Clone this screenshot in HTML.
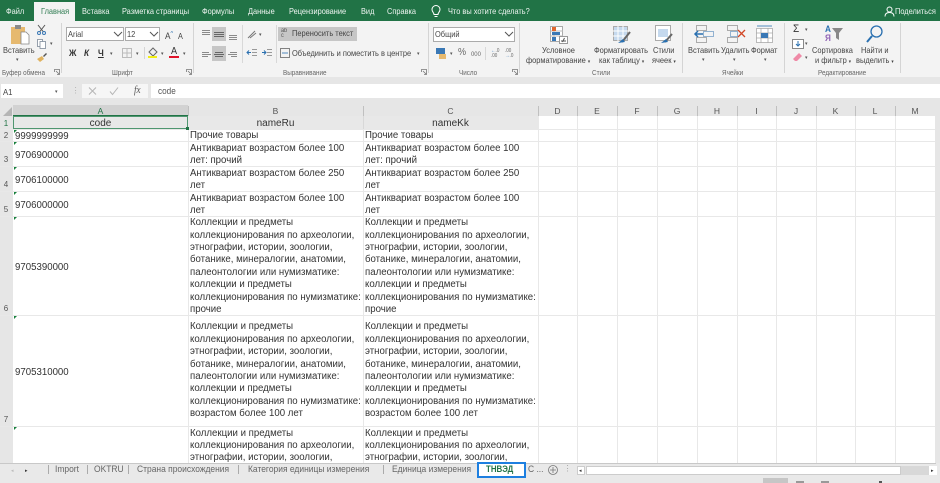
<!DOCTYPE html>
<html lang="ru"><head><meta charset="utf-8"><title>Excel</title>
<style>
html,body{margin:0;padding:0;background:#fff}
#p{position:relative;width:940px;height:483px;overflow:hidden;background:#fff;font-family:"Liberation Sans","Noto Sans CJK SC",sans-serif;filter:blur(.3px)}
#p div,#p span.a{position:absolute;white-space:nowrap}
.t{color:#fff;font-size:8.5px;top:6px;line-height:11px;opacity:.93;transform:scaleX(.87);transform-origin:0 50%}
.r{color:#444;font-size:8.2px;line-height:10px;transform:scaleX(.91);transform-origin:0 50%}
.g{color:#666;font-size:7.2px;line-height:9px;top:68px;transform:scaleX(.88);transform-origin:0 50%}
.v{background:#d4d4d4;width:1px;top:23px;height:50px}
.h{color:#555;font-size:8.5px;top:105px;line-height:12px;text-align:center}
.c{color:#333;font-size:10px;line-height:12px;margin-top:1px;transform:scaleX(.965);transform-origin:0 50%}
.d{margin-top:2px}
.n{color:#555;font-size:8px;left:0;width:12px;text-align:center;line-height:10px}
.gl{background:#e8e8e8}
.m{width:0;height:0;border-left:3px solid #18803c;border-bottom:3px solid transparent;left:14px}
.s{color:#666;font-size:9.3px;line-height:12px;top:463px;transform:scaleX(.91);transform-origin:0 50%}
.sp{background:#aaa;width:1px;top:465px;height:9px}
.ar{color:#555;font-size:5px;line-height:6px}
svg{position:absolute;overflow:visible}
</style></head><body><div id="p">

<div style="left:0;top:0;width:940px;height:21px;background:#217346"></div>
<div style="left:34px;top:2px;width:41px;height:19px;background:#f3f3f3"></div>
<div class="t" style="left:6px">Файл</div>
<div class="t" style="left:41px;color:#217346">Главная</div>
<div class="t" style="left:82px">Вставка</div>
<div class="t" style="left:122px">Разметка страницы</div>
<div class="t" style="left:202px">Формулы</div>
<div class="t" style="left:248px">Данные</div>
<div class="t" style="left:289px">Рецензирование</div>
<div class="t" style="left:361px">Вид</div>
<div class="t" style="left:387px">Справка</div>
<svg style="left:431px;top:5px" width="10" height="13" viewBox="0 0 10 13" fill="none" stroke="#fff"><path d="M3 9.5C3 7.5 1 7 1 4.500A4 4 0 0 1 9 4.500C9 7 7 7.500 7 9.500ZM3.500 11.500H6.500"/></svg>
<div class="t" style="left:448px">Что вы хотите сделать?</div>
<svg style="left:884px;top:6px" width="11" height="11" viewBox="0 0 11 11" fill="none" stroke="#fff"><circle cx="5.500" cy="3.500" r="2.500"/><path d="M1 10.500C1 7.500 3 6.500 5.500 6.500S10 7.500 10 10.500"/></svg>
<div class="t" style="left:895px">Поделиться</div>

<div style="left:0;top:21px;width:940px;height:56px;background:#f3f3f3"></div>
<div style="left:0;top:77px;width:940px;height:7px;background:#e6e6e6"></div>
<div class="v" style="left:61px"></div><div class="v" style="left:193px"></div><div class="v" style="left:428px"></div><div class="v" style="left:519px"></div><div class="v" style="left:682px"></div><div class="v" style="left:784px"></div><div class="v" style="left:900px"></div>

<!-- clipboard -->
<svg style="left:11px;top:25px" width="19" height="20" viewBox="0 0 19 20"><rect x="0" y="2" width="14" height="17" fill="#e6b96f"/><rect x="4" y="0" width="6" height="4" fill="#8a8a8a"/><path d="M10 7H15L18 10V19H10Z" fill="#fff" stroke="#888" stroke-width=".8"/></svg>
<div class="r" style="left:3px;top:46px">Вставить</div><div class="ar" style="left:16px;top:57px">▾</div>
<svg style="left:37px;top:25px" width="9" height="10" viewBox="0 0 9 10" fill="none" stroke="#555"><path d="M1 0L6.500 7M8 0L2.500 7" /><circle cx="2" cy="8" r="1.500" stroke="#3a78b5"/><circle cx="7" cy="8" r="1.500" stroke="#3a78b5"/></svg>
<svg style="left:37px;top:39px" width="9" height="10" viewBox="0 0 9 10" fill="#fff" stroke="#7d8a99" stroke-width=".8"><rect x=".5" y=".5" width="5" height="7"/><rect x="3" y="2.500" width="5.500" height="7"/></svg>
<div class="ar" style="left:50px;top:41px">▾</div>
<svg style="left:37px;top:53px" width="10" height="9" viewBox="0 0 10 9"><path d="M0 6L5 3L7 6L3 9Z" fill="#e0b25e"/><path d="M6 3L9 0L10 1L7 4Z" fill="#555"/></svg>
<div class="g" style="left:2px">Буфер обмена</div>
<svg style="left:54px;top:69px" width="6" height="6" fill="none" stroke="#777" stroke-width=".8"><path d="M.5 3V.5H5.500V5.500H3M2 2L5 5"/></svg>

<!-- font -->
<div style="left:66px;top:27px;width:58px;height:14px;background:#fff;border:1px solid #ababab;box-sizing:border-box"></div>
<div style="left:125px;top:27px;width:35px;height:14px;background:#fff;border:1px solid #ababab;box-sizing:border-box"></div>
<div class="r" style="left:68px;top:30px;color:#444">Arial</div>
<div class="r" style="left:127px;top:30px;color:#444">12</div>
<svg style="left:114px;top:32px" width="8" height="5" fill="none" stroke="#555"><path d="M0 0L4 4L8 0"/></svg>
<svg style="left:150px;top:32px" width="8" height="5" fill="none" stroke="#555"><path d="M0 0L4 4L8 0"/></svg>
<div class="r" style="left:165px;top:29px;font-size:9px;color:#444">A<span style="font-size:6px;color:#2a70b0;vertical-align:4px">^</span></div>
<div class="r" style="left:178px;top:30px;font-size:8px;color:#444">A<span style="font-size:6px;color:#2a70b0;vertical-align:3px">ˇ</span></div>
<div class="r" style="left:69px;top:48px;font-weight:bold;font-size:9px;color:#333">Ж</div>
<div class="r" style="left:84px;top:48px;font-weight:bold;font-style:italic;font-size:9px;color:#333">К</div>
<div class="r" style="left:98px;top:48px;font-weight:bold;font-size:9px;color:#333;text-decoration:underline">Ч</div>
<div class="ar" style="left:110px;top:51px">▾</div>
<svg style="left:122px;top:48px" width="10" height="10" fill="none" stroke="#bbb"><rect x=".5" y=".5" width="9" height="9"/><path d="M5 0V10M0 5H10"/></svg>
<div class="ar" style="left:136px;top:51px">▾</div>
<div style="left:144px;top:47px;width:1px;height:12px;background:#d4d4d4"></div>
<svg style="left:148px;top:48px" width="10" height="8" viewBox="0 0 10 8" fill="none" stroke="#666"><path d="M5 0L9 4L5 8L1 4Z" fill="#eee"/></svg>
<div style="left:148px;top:56px;width:9px;height:2px;background:#f2ee14"></div>
<div class="ar" style="left:161px;top:51px">▾</div>
<div class="r" style="left:171px;top:47px;font-size:10px;color:#333">A</div>
<div style="left:169px;top:56px;width:10px;height:2px;background:#e0142a"></div>
<div class="ar" style="left:183px;top:51px">▾</div>
<div class="g" style="left:112px">Шрифт</div>
<svg style="left:186px;top:69px" width="6" height="6" fill="none" stroke="#777" stroke-width=".8"><path d="M.5 3V.5H5.500V5.500H3M2 2L5 5"/></svg>

<!-- alignment -->
<div style="left:212px;top:27px;width:14px;height:14px;background:#c6c6c6"></div>
<div style="left:212px;top:46px;width:14px;height:15px;background:#c6c6c6"></div>
<svg style="left:200px;top:29px" width="40" height="30" fill="none" stroke="#8a8a8a"><path d="M2 1.500H10M2 3.500H10M2 5.500H10" /><path stroke="#666" d="M14 3.500H24M14 5.500H24M14 7.500H24"/><path d="M29 6.500H37M29 8.500H37M29 10.500H37"/><path d="M2 23.500H9M2 25.500H11M2 27.500H8"/><path stroke="#666" d="M15 23.500H23M14 25.500H24M15 27.500H23"/><path d="M30 23.500H37M28 25.500H37M31 27.500H37"/></svg>
<svg style="left:247px;top:30px" width="10" height="9" fill="none" stroke="#777"><path d="M1 8L8 1M3 8L9 3" /></svg><div class="ar" style="left:259px;top:32px">▾</div>
<div style="left:242px;top:25px;width:1px;height:38px;background:#d8d8d8"></div>
<svg style="left:247px;top:49px" width="10" height="9" fill="none" stroke="#999"><path d="M5 .5H10M5 3.500H10M5 6.500H10"/><path stroke="#2a70b0" d="M4 3.500H0M2 1.500L0 3.500L2 5.500"/></svg>
<svg style="left:262px;top:49px" width="10" height="9" fill="none" stroke="#999"><path d="M5 .5H10M5 3.500H10M5 6.500H10"/><path stroke="#2a70b0" d="M0 3.500H4M2 1.500L4 3.500L2 5.500"/></svg>
<div style="left:276px;top:25px;width:1px;height:38px;background:#d8d8d8"></div>
<div style="left:278px;top:27px;width:79px;height:14px;background:#c6c6c6"></div>
<div class="r" style="left:281px;top:29px;font-size:6px;line-height:5px;color:#555;white-space:normal;width:8px">ab<br>c</div>
<div class="r" style="left:292px;top:29px">Переносить текст</div>
<svg style="left:280px;top:48px" width="10" height="11" fill="none" stroke="#666" stroke-width=".8"><rect x=".5" y=".5" width="9" height="9"/><path stroke="#2a70b0" d="M2 5H8"/></svg>
<div class="r" style="left:292px;top:49px">Объединить и поместить в центре</div>
<div class="ar" style="left:417px;top:51px">▾</div>
<div class="g" style="left:283px">Выравнивание</div>
<svg style="left:421px;top:69px" width="6" height="6" fill="none" stroke="#777" stroke-width=".8"><path d="M.5 3V.5H5.500V5.500H3M2 2L5 5"/></svg>

<!-- number -->
<div style="left:433px;top:27px;width:82px;height:15px;background:#fff;border:1px solid #ababab;box-sizing:border-box"></div>
<div class="r" style="left:435px;top:30px">Общий</div>
<svg style="left:505px;top:32px" width="8" height="5" fill="none" stroke="#555"><path d="M0 0L4 4L8 0"/></svg>
<svg style="left:436px;top:48px" width="11" height="11"><rect width="9" height="6" fill="#3a78b5"/><rect x="3" y="6" width="7" height="5" fill="#e6b96f"/></svg>
<div class="ar" style="left:450px;top:51px">▾</div>
<div class="r" style="left:458px;top:48px;font-size:10px;color:#666">%</div>
<div class="r" style="left:471px;top:50px;font-size:6.500px;color:#666">000</div>
<div style="left:485px;top:47px;width:1px;height:13px;background:#d8d8d8"></div>
<div class="r" style="left:491px;top:49px;font-size:5px;line-height:5px;color:#3a78b5">←<span style="color:#666">.0</span><br><span style="color:#666">.00</span></div>
<div class="r" style="left:505px;top:49px;font-size:5px;line-height:5px;color:#666">.00<br><span style="color:#3a78b5">→</span>.0</div>
<div class="g" style="left:459px">Число</div>
<svg style="left:512px;top:69px" width="6" height="6" fill="none" stroke="#777" stroke-width=".8"><path d="M.5 3V.5H5.500V5.500H3M2 2L5 5"/></svg>

<!-- styles -->
<svg style="left:550px;top:26px" width="19" height="18"><rect x=".5" y=".5" width="12" height="15" fill="#fff" stroke="#aaa"/><path d="M0 5H13M0 10H13M4 0V16" stroke="#bbb"/><rect x="2" y="1" width="4" height="4" fill="#e0672e"/><rect x="2" y="6" width="8" height="3" fill="#3a78b5"/><rect x="2" y="11" width="4" height="4" fill="#3a78b5"/><rect x="9.500" y="10.500" width="8" height="7" fill="#fff" stroke="#999"/><path d="M11 15H16M14.500 12L12.500 16" stroke="#555"/></svg>
<div class="r" style="left:542px;top:46px">Условное</div>
<div class="r" style="left:526px;top:56px">форматирование <span style="font-size:5px">▾</span></div>
<svg style="left:613px;top:26px" width="18" height="18"><rect x=".5" y=".5" width="14" height="14" fill="#c5d9ee" stroke="#aaa"/><path d="M0 5H15M0 10H15M5 0V15M10 0V15" stroke="#fff"/><path d="M9 16L17 6" stroke="#666" stroke-width="2"/><path d="M5 17L10 13L12 16Z" fill="#2a70b0"/></svg>
<div class="r" style="left:594px;top:46px">Форматировать</div>
<div class="r" style="left:599px;top:56px">как таблицу <span style="font-size:5px">▾</span></div>
<svg style="left:655px;top:25px" width="18" height="19"><rect x=".5" y=".5" width="15" height="15" fill="#fff" stroke="#aaa"/><rect x="3" y="4" width="10" height="8" fill="#c5d9ee"/><path d="M10 17L17 9" stroke="#666" stroke-width="2"/><path d="M6 18L11 14L13 17Z" fill="#2a70b0"/></svg>
<div class="r" style="left:653px;top:46px">Стили</div>
<div class="r" style="left:652px;top:56px">ячеек <span style="font-size:5px">▾</span></div>
<div class="g" style="left:592px">Стили</div>

<!-- cells -->
<svg style="left:694px;top:25px" width="20" height="19" fill="none" stroke="#999" stroke-width=".8"><rect x="2.500" y=".5" width="10" height="5"/><rect x="2.500" y="12.500" width="10" height="5"/><rect x="9.500" y="6.500" width="10" height="5" stroke="#7aa2c8"/><path stroke="#2a70b0" stroke-width="1.500" d="M9 9H1M4 6L1 9L4 12"/></svg>
<div class="r" style="left:688px;top:46px">Вставить</div><div class="ar" style="left:702px;top:57px">▾</div>
<svg style="left:727px;top:25px" width="19" height="19" fill="none" stroke="#999" stroke-width=".8"><rect x=".5" y=".5" width="10" height="5"/><rect x=".5" y="12.500" width="10" height="5"/><rect x="3.500" y="6.500" width="7" height="5" stroke="#7aa2c8"/><path stroke="#d24726" stroke-width="1.300" d="M11 5L18 12M18 5L11 12"/></svg>
<div class="r" style="left:721px;top:46px">Удалить</div><div class="ar" style="left:733px;top:57px">▾</div>
<svg style="left:756px;top:25px" width="17" height="19" fill="none" stroke="#aaa" stroke-width=".8"><rect x=".5" y="3.500" width="16" height="14" fill="#fff"/><path d="M0 8H17M0 13H17M5 3V18M12 3V18"/><rect x="5" y="8" width="7" height="5" fill="#3a78b5" stroke="none"/><path stroke="#2a70b0" d="M1 1H16"/></svg>
<div class="r" style="left:751px;top:46px">Формат</div><div class="ar" style="left:764px;top:57px">▾</div>
<div class="g" style="left:722px">Ячейки</div>

<!-- editing -->
<div class="r" style="left:793px;top:23px;font-size:11px;line-height:13px;color:#333">Σ</div><div class="ar" style="left:805px;top:27px">▾</div>
<svg style="left:792px;top:39px" width="12" height="10" fill="#fff" stroke="#888"><rect x=".5" y=".5" width="11" height="9"/><path stroke="#2a70b0" d="M6 2V7M4 5L6 7L8 5"/></svg><div class="ar" style="left:805px;top:41px">▾</div>
<svg style="left:793px;top:53px" width="10" height="9"><path d="M0 6L6 0L9 3L4 8H2Z" fill="#ef8aa7"/></svg><div class="ar" style="left:805px;top:55px">▾</div>
<div class="r" style="left:825px;top:24px;font-size:9px;line-height:10px;font-weight:bold;color:#2a70b0">А</div>
<div class="r" style="left:825px;top:34px;font-size:9px;line-height:9px;font-weight:bold;color:#9063b5">Я</div>
<svg style="left:832px;top:28px" width="11" height="12"><path d="M0 0H11L7 5V12L4 10V5Z" fill="#888"/></svg>
<div class="r" style="left:812px;top:46px">Сортировка</div>
<div class="r" style="left:815px;top:56px">и фильтр <span style="font-size:5px">▾</span></div>
<svg style="left:866px;top:25px" width="17" height="18" fill="none" stroke="#2a70b0" stroke-width="1.300"><circle cx="10.500" cy="6.500" r="5.500"/><path stroke-width="2" d="M6 11L1 17"/></svg>
<div class="r" style="left:861px;top:46px">Найти и</div>
<div class="r" style="left:856px;top:56px">выделить <span style="font-size:5px">▾</span></div>
<div class="g" style="left:818px">Редактирование</div>

<!-- formula bar -->
<div style="left:0;top:84px;width:940px;height:21px;background:#e6e6e6"></div>
<div style="left:1px;top:84px;width:62px;height:14px;background:#fff"></div>
<div class="r" style="left:3px;top:87px;font-size:8.500px">A1</div><div class="ar" style="left:55px;top:89px">▾</div>
<div style="left:82px;top:84px;width:66px;height:14px;background:#f6f6f6"></div>
<div style="left:151px;top:84px;width:789px;height:14px;background:#fff"></div>
<div class="r" style="left:72px;top:86px;color:#aaa">⋮</div>
<svg style="left:89px;top:87px" width="30" height="9" fill="none" stroke="#b5b5b5"><path d="M0 .5L7 7.500M7 .5L0 7.500M21 4.500L23.500 7.500L29 .5"/></svg>
<div class="r" style="left:134px;top:86px;font-family:'Liberation Serif',serif;font-style:italic;font-size:10px;color:#555">fx</div>
<div class="r" style="left:158px;top:86px;font-size:9px;color:#555">code</div>

<!-- headers -->
<div style="left:0;top:105px;width:940px;height:11px;background:#e6e6e6"></div>
<div style="left:0;top:105px;width:13px;height:358px;background:#e6e6e6"></div>
<div style="left:13px;top:105px;width:175px;height:11px;background:#d2d2d2"></div>
<div style="left:13px;top:115px;width:175px;height:1px;background:#217346"></div>
<svg style="left:3px;top:107px" width="9" height="9"><path d="M9 0V9H0Z" fill="#b5b5b5"/></svg>
<div class="h" style="left:13px;width:175px;color:#217346">A</div>
<div class="h" style="left:188px;width:175px">B</div>
<div class="h" style="left:363px;width:175px">C</div>
<div class="h" style="left:538px;width:39px">D</div>
<div class="h" style="left:577px;width:40px">E</div>
<div class="h" style="left:617px;width:40px">F</div>
<div class="h" style="left:657px;width:40px">G</div>
<div class="h" style="left:697px;width:40px">H</div>
<div class="h" style="left:737px;width:39px">I</div>
<div class="h" style="left:776px;width:40px">J</div>
<div class="h" style="left:816px;width:39px">K</div>
<div class="h" style="left:855px;width:40px">L</div>
<div class="h" style="left:895px;width:40px">M</div>
<div style="left:188px;top:106px;width:1px;height:10px;background:#c0c0c0"></div>
<div style="left:363px;top:106px;width:1px;height:10px;background:#c0c0c0"></div>
<div style="left:538px;top:106px;width:1px;height:10px;background:#c0c0c0"></div>
<div style="left:577px;top:106px;width:1px;height:10px;background:#c0c0c0"></div>
<div style="left:617px;top:106px;width:1px;height:10px;background:#c0c0c0"></div>
<div style="left:657px;top:106px;width:1px;height:10px;background:#c0c0c0"></div>
<div style="left:697px;top:106px;width:1px;height:10px;background:#c0c0c0"></div>
<div style="left:737px;top:106px;width:1px;height:10px;background:#c0c0c0"></div>
<div style="left:776px;top:106px;width:1px;height:10px;background:#c0c0c0"></div>
<div style="left:816px;top:106px;width:1px;height:10px;background:#c0c0c0"></div>
<div style="left:855px;top:106px;width:1px;height:10px;background:#c0c0c0"></div>
<div style="left:895px;top:106px;width:1px;height:10px;background:#c0c0c0"></div>

<!-- grid -->
<div class="gl" style="left:188px;top:116px;width:1px;height:347px"></div>
<div class="gl" style="left:363px;top:116px;width:1px;height:347px"></div>
<div class="gl" style="left:538px;top:116px;width:1px;height:347px"></div>
<div class="gl" style="left:577px;top:116px;width:1px;height:347px"></div>
<div class="gl" style="left:617px;top:116px;width:1px;height:347px"></div>
<div class="gl" style="left:657px;top:116px;width:1px;height:347px"></div>
<div class="gl" style="left:697px;top:116px;width:1px;height:347px"></div>
<div class="gl" style="left:737px;top:116px;width:1px;height:347px"></div>
<div class="gl" style="left:776px;top:116px;width:1px;height:347px"></div>
<div class="gl" style="left:816px;top:116px;width:1px;height:347px"></div>
<div class="gl" style="left:855px;top:116px;width:1px;height:347px"></div>
<div class="gl" style="left:895px;top:116px;width:1px;height:347px"></div>
<div style="left:935px;top:105px;width:5px;height:359px;background:#e6e6e6"></div>
<div class="gl" style="left:0;top:129px;width:935px;height:1px"></div>
<div class="gl" style="left:0;top:141px;width:935px;height:1px"></div>
<div class="gl" style="left:0;top:166px;width:935px;height:1px"></div>
<div class="gl" style="left:0;top:191px;width:935px;height:1px"></div>
<div class="gl" style="left:0;top:216px;width:935px;height:1px"></div>
<div class="gl" style="left:0;top:315px;width:935px;height:1px"></div>
<div class="gl" style="left:0;top:426px;width:935px;height:1px"></div>

<!-- row 1 -->
<div style="left:13px;top:116px;width:175px;height:13px;background:#e8e8e8;outline:1px solid #4f9670;outline-offset:-1px"></div>
<div style="left:188px;top:116px;width:350px;height:13px;background:#e8e8e8"></div>
<div style="left:363px;top:116px;width:1px;height:13px;background:#d8d8d8"></div>
<div style="left:186px;top:127px;width:3px;height:3px;background:#217346"></div>
<div class="c" style="left:13px;width:175px;text-align:center;top:117px;transform:none">code</div>
<div class="c" style="left:188px;width:175px;text-align:center;top:117px;transform:none">nameRu</div>
<div class="c" style="left:363px;width:175px;text-align:center;top:117px;transform:none">nameKk</div>

<!-- row numbers -->
<div class="n" style="top:119px;color:#217346">1</div>
<div class="n" style="top:131px">2</div>
<div class="n" style="top:155px">3</div>
<div class="n" style="top:180px">4</div>
<div class="n" style="top:205px">5</div>
<div class="n" style="top:304px">6</div>
<div class="n" style="top:415px">7</div>

<div class="m" style="top:130px"></div><div class="m" style="top:142px"></div><div class="m" style="top:167px"></div><div class="m" style="top:192px"></div><div class="m" style="top:217px"></div><div class="m" style="top:316px"></div><div class="m" style="top:427px"></div>

<div class="c d" style="left:15px;top:129px">9999999999</div>
<div class="c d" style="left:15px;top:148px">9706900000</div>
<div class="c d" style="left:15px;top:173px">9706100000</div>
<div class="c d" style="left:15px;top:198px">9706000000</div>
<div class="c d" style="left:15px;top:260px">9705390000</div>
<div class="c d" style="left:15px;top:365px">9705310000</div>

<!-- B -->
<div class="c" style="left:190px;top:129px">Прочие товары</div>
<div class="c" style="left:190px;top:142px">Антиквариат возрастом более 100</div>
<div class="c" style="left:190px;top:154px">лет: прочий</div>
<div class="c" style="left:190px;top:167px">Антиквариат возрастом более 250</div>
<div class="c" style="left:190px;top:179px">лет</div>
<div class="c" style="left:190px;top:192px">Антиквариат возрастом более 100</div>
<div class="c" style="left:190px;top:204px">лет</div>
<div class="c" style="left:190px;top:216px">Коллекции и предметы</div>
<div class="c" style="left:190px;top:229px">коллекционирования по археологии,</div>
<div class="c" style="left:190px;top:241px">этнографии, истории, зоологии,</div>
<div class="c" style="left:190px;top:253px">ботанике, минералогии, анатомии,</div>
<div class="c" style="left:190px;top:266px">палеонтологии или нумизматике:</div>
<div class="c" style="left:190px;top:278px">коллекции и предметы</div>
<div class="c" style="left:190px;top:291px">коллекционирования по нумизматике:</div>
<div class="c" style="left:190px;top:303px">прочие</div>
<div class="c" style="left:190px;top:320px">Коллекции и предметы</div>
<div class="c" style="left:190px;top:333px">коллекционирования по археологии,</div>
<div class="c" style="left:190px;top:345px">этнографии, истории, зоологии,</div>
<div class="c" style="left:190px;top:358px">ботанике, минералогии, анатомии,</div>
<div class="c" style="left:190px;top:370px">палеонтологии или нумизматике:</div>
<div class="c" style="left:190px;top:382px">коллекции и предметы</div>
<div class="c" style="left:190px;top:395px">коллекционирования по нумизматике:</div>
<div class="c" style="left:190px;top:407px">возрастом более 100 лет</div>
<div class="c" style="left:190px;top:427px">Коллекции и предметы</div>
<div class="c" style="left:190px;top:439px">коллекционирования по археологии,</div>
<div class="c" style="left:190px;top:451px">этнографии, истории, зоологии,</div>

<!-- C -->
<div class="c" style="left:365px;top:129px">Прочие товары</div>
<div class="c" style="left:365px;top:142px">Антиквариат возрастом более 100</div>
<div class="c" style="left:365px;top:154px">лет: прочий</div>
<div class="c" style="left:365px;top:167px">Антиквариат возрастом более 250</div>
<div class="c" style="left:365px;top:179px">лет</div>
<div class="c" style="left:365px;top:192px">Антиквариат возрастом более 100</div>
<div class="c" style="left:365px;top:204px">лет</div>
<div class="c" style="left:365px;top:216px">Коллекции и предметы</div>
<div class="c" style="left:365px;top:229px">коллекционирования по археологии,</div>
<div class="c" style="left:365px;top:241px">этнографии, истории, зоологии,</div>
<div class="c" style="left:365px;top:253px">ботанике, минералогии, анатомии,</div>
<div class="c" style="left:365px;top:266px">палеонтологии или нумизматике:</div>
<div class="c" style="left:365px;top:278px">коллекции и предметы</div>
<div class="c" style="left:365px;top:291px">коллекционирования по нумизматике:</div>
<div class="c" style="left:365px;top:303px">прочие</div>
<div class="c" style="left:365px;top:320px">Коллекции и предметы</div>
<div class="c" style="left:365px;top:333px">коллекционирования по археологии,</div>
<div class="c" style="left:365px;top:345px">этнографии, истории, зоологии,</div>
<div class="c" style="left:365px;top:358px">ботанике, минералогии, анатомии,</div>
<div class="c" style="left:365px;top:370px">палеонтологии или нумизматике:</div>
<div class="c" style="left:365px;top:382px">коллекции и предметы</div>
<div class="c" style="left:365px;top:395px">коллекционирования по нумизматике:</div>
<div class="c" style="left:365px;top:407px">возрастом более 100 лет</div>
<div class="c" style="left:365px;top:427px">Коллекции и предметы</div>
<div class="c" style="left:365px;top:439px">коллекционирования по археологии,</div>
<div class="c" style="left:365px;top:451px">этнографии, истории, зоологии,</div>

<!-- sheet tabs -->
<div style="left:0;top:463px;width:940px;height:20px;background:#e9e9e9"></div>
<div style="left:0;top:463px;width:936px;height:1px;background:#c8c8c8"></div>
<div class="ar" style="left:11px;top:468px;color:#bbb">◂</div>
<div class="ar" style="left:25px;top:468px;color:#333">▸</div>
<div class="sp" style="left:48px"></div><div class="sp" style="left:87px"></div><div class="sp" style="left:128px"></div><div class="sp" style="left:238px"></div><div class="sp" style="left:383px"></div>
<div class="s" style="left:55px">Import</div>
<div class="s" style="left:94px">OKTRU</div>
<div class="s" style="left:137px">Страна происхождения</div>
<div class="s" style="left:248px">Категория единицы измерения</div>
<div class="s" style="left:392px">Единица измерения</div>
<div style="left:477px;top:462px;width:49px;height:16px;background:#fff;border:2px solid #1d7fe0;box-sizing:border-box"></div>
<div class="s" style="left:486px;font-weight:bold;color:#217346;transform:scaleX(.85)">ТНВЭД</div>
<div class="s" style="left:528px">С ...</div>
<svg style="left:548px;top:465px" width="10" height="10" fill="none" stroke="#777" stroke-width=".8"><circle cx="5" cy="5" r="4.500"/><path d="M5 2V8M2 5H8"/></svg>
<div class="r" style="left:564px;top:464px;color:#999">⋮</div>
<div style="left:577px;top:466px;width:8px;height:9px;background:#fff;border:1px solid #ccc;box-sizing:border-box"></div>
<div class="ar" style="left:579px;top:468px;color:#333">◂</div>
<div style="left:586px;top:466px;width:315px;height:9px;background:#fff;border:1px solid #ccc;box-sizing:border-box"></div>
<div style="left:901px;top:466px;width:28px;height:9px;background:#d8d8d8"></div>
<div style="left:929px;top:466px;width:8px;height:9px;background:#fff"></div>
<div class="ar" style="left:931px;top:468px;color:#333">▸</div>
<div style="left:763px;top:478px;width:25px;height:5px;background:#c6c6c6"></div>
<div style="left:796px;top:481px;width:8px;height:2px;background:#999"></div>
<div style="left:821px;top:481px;width:8px;height:2px;background:#999"></div>
<div style="left:879px;top:481px;width:3px;height:2px;background:#555"></div>
</div></body></html>
